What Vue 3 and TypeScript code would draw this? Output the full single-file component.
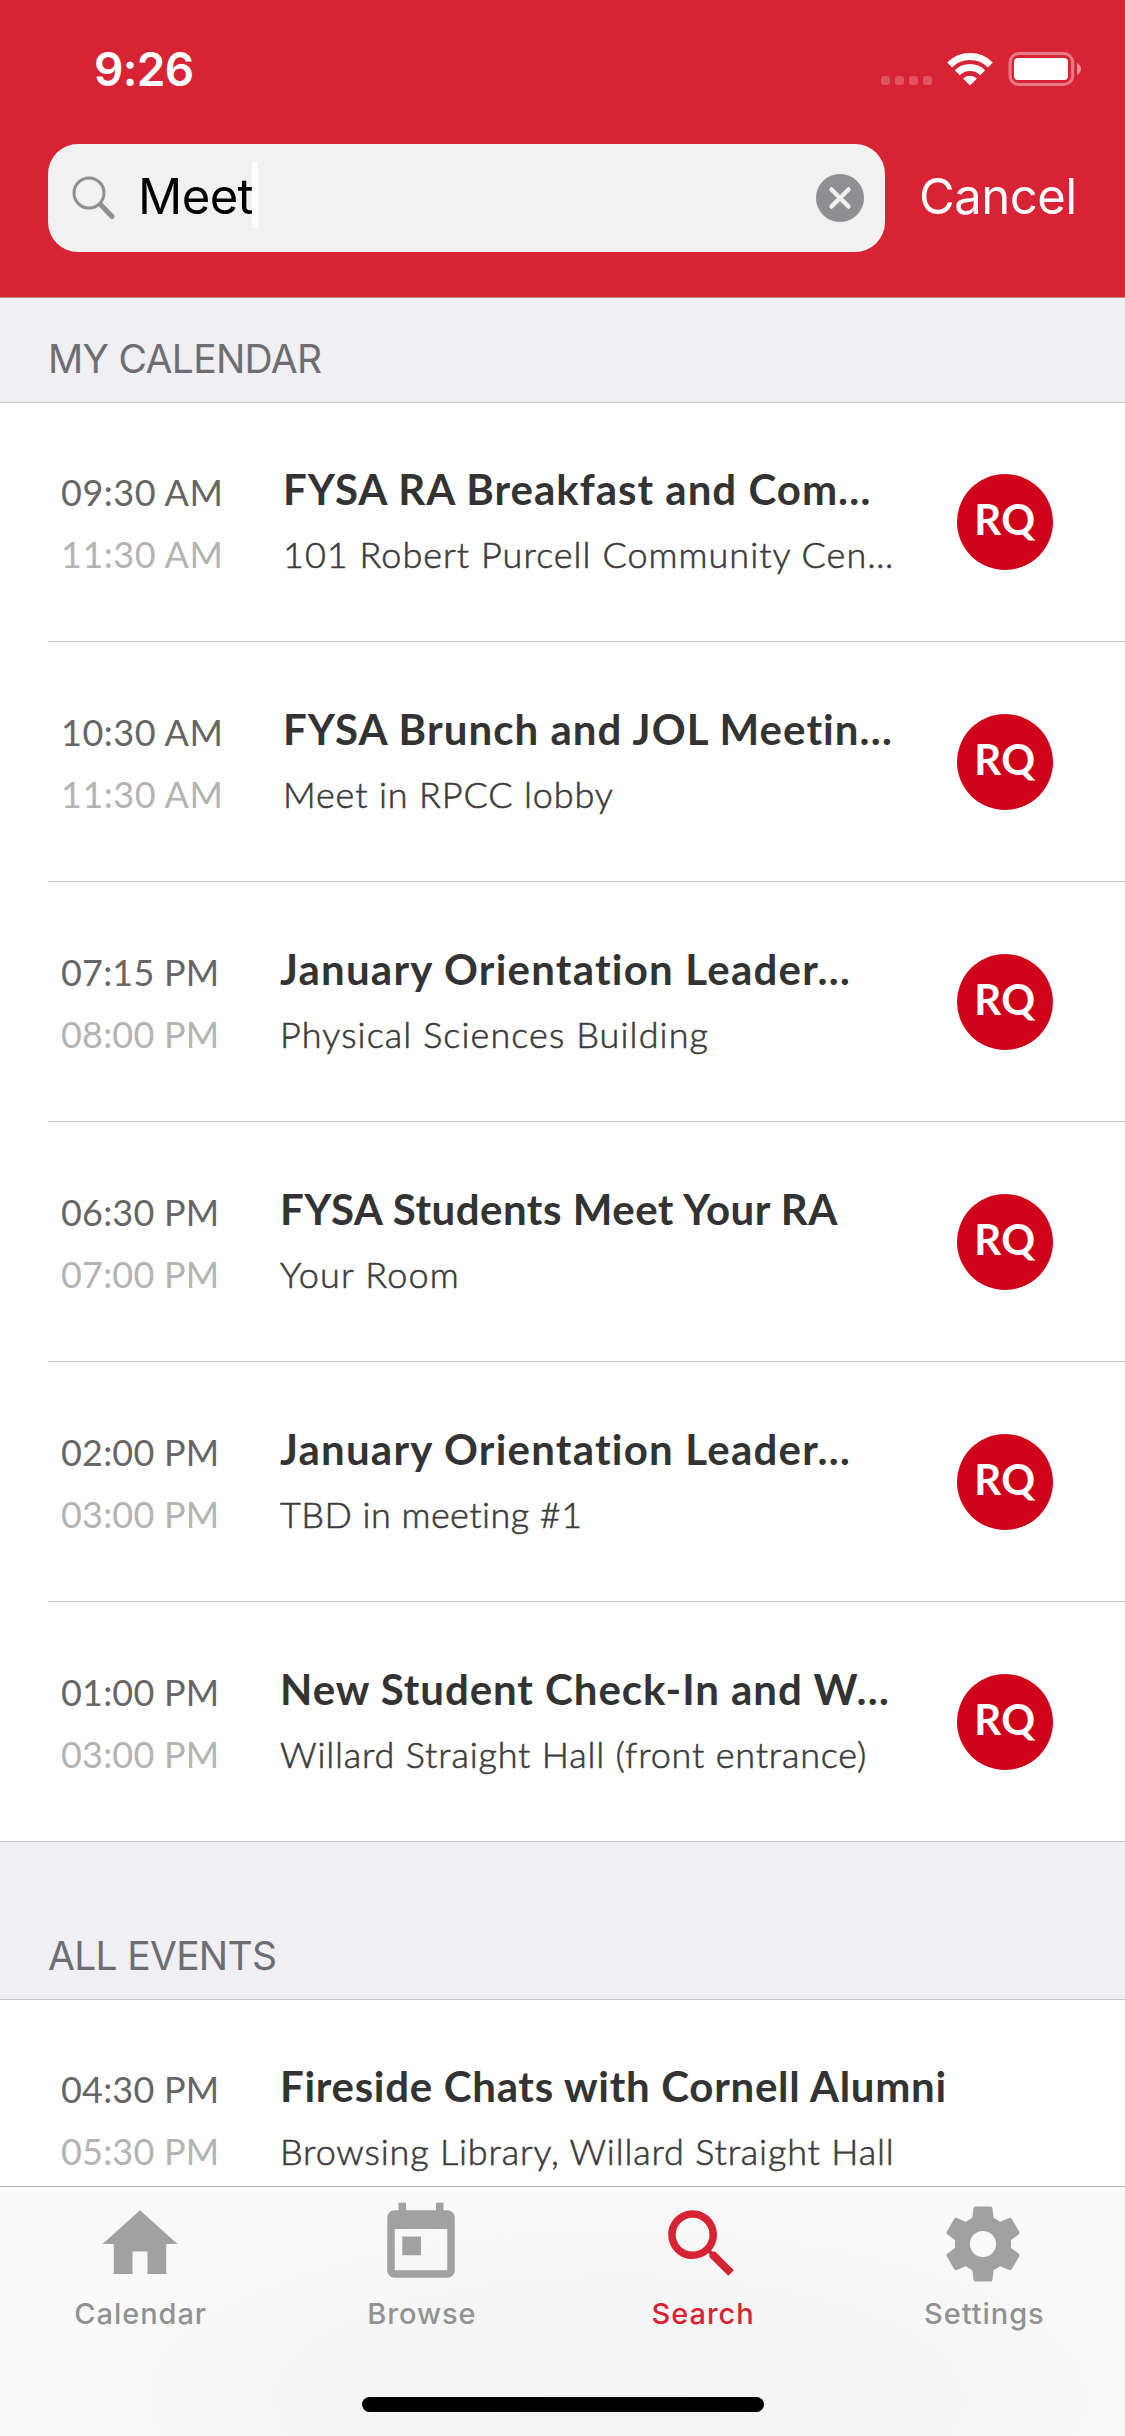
<script setup lang="ts">
interface CalendarEvent {
  start: string
  end: string
  title: string
  place: string
  titleTracking: number
  placeTracking: number
  owner?: string
}

interface Section {
  name: string
  events: CalendarEvent[]
}

interface Tab {
  label: string
  icon: string
  active?: boolean
}

const sections: Section[] = [
  {
    name: 'MY CALENDAR',
    events: [
      { start: '09:30 AM', end: '11:30 AM', title: 'FYSA RA Breakfast and Com…', place: '101 Robert Purcell Community Cen…', titleTracking: 1, placeTracking: 1.03, owner: 'RQ' },
      { start: '10:30 AM', end: '11:30 AM', title: 'FYSA Brunch and JOL Meetin…', place: 'Meet in RPCC lobby', titleTracking: 1.06, placeTracking: 0.85, owner: 'RQ' },
      { start: '07:15 PM', end: '08:00 PM', title: 'January Orientation Leader…', place: 'Physical Sciences Building', titleTracking: 1.22, placeTracking: 1.1, owner: 'RQ' },
      { start: '06:30 PM', end: '07:00 PM', title: 'FYSA Students Meet Your RA', place: 'Your Room', titleTracking: 0.5, placeTracking: 1.2, owner: 'RQ' },
      { start: '02:00 PM', end: '03:00 PM', title: 'January Orientation Leader…', place: 'TBD in meeting #1', titleTracking: 1.22, placeTracking: 0.45, owner: 'RQ' },
      { start: '01:00 PM', end: '03:00 PM', title: 'New Student Check-In and W…', place: 'Willard Straight Hall (front entrance)', titleTracking: 0.94, placeTracking: 0.82, owner: 'RQ' },
    ],
  },
  {
    name: 'ALL EVENTS',
    events: [
      { start: '04:30 PM', end: '05:30 PM', title: 'Fireside Chats with Cornell Alumni', place: 'Browsing Library, Willard Straight Hall', titleTracking: 0.7, placeTracking: 0.82 },
    ],
  },
]

const tabs: Tab[] = [
  { label: 'Calendar', icon: 'M10 20v-6h4v6h5v-8h3L12 3 2 12h3v8z' },
  { label: 'Browse', icon: 'M19 3h-1V1h-2v2H8V1H6v2H5c-1.11 0-1.99.9-1.99 2L3 19c0 1.1.89 2 2 2h14c1.1 0 2-.9 2-2V5c0-1.1-.9-2-2-2zm0 16H5V8h14v11zM7 10h5v5H7z' },
  { label: 'Search', active: true, icon: 'M15.5 14h-.79l-.28-.27C15.41 12.59 16 11.11 16 9.5 16 5.91 13.09 3 9.5 3S3 5.91 3 9.5 5.91 16 9.5 16c1.61 0 3.09-.59 4.23-1.57l.27.28v.79l5 4.99L20.49 19l-4.99-5zm-6 0C7.01 14 5 11.99 5 9.5S7.01 5 9.5 5 14 7.01 14 9.5 11.99 14 9.5 14z' },
  { label: 'Settings', icon: 'M19.43 12.98c.04-.32.07-.64.07-.98s-.03-.66-.07-.98l2.11-1.65c.19-.15.24-.42.12-.64l-2-3.46c-.12-.22-.39-.3-.61-.22l-2.49 1c-.52-.4-1.08-.73-1.69-.98l-.38-2.65C14.46 2.18 14.25 2 14 2h-4c-.25 0-.46.18-.49.42l-.38 2.65c-.61.25-1.17.59-1.69.98l-2.49-1c-.23-.09-.49 0-.61.22l-2 3.46c-.13.22-.07.49.12.64l2.11 1.65c-.04.32-.07.65-.07.98s.03.66.07.98l-2.11 1.65c-.19.15-.24.42-.12.64l2 3.46c.12.22.39.3.61.22l2.49-1c.52.4 1.08.73 1.69.98l.38 2.65c.03.24.24.42.49.42h4c.25 0 .46-.18.49-.42l.38-2.65c.61-.25 1.17-.59 1.69-.98l2.49 1c.23.09.49 0 .61-.22l2-3.46c.12-.22.07-.49-.12-.64l-2.11-1.65zM12 15.5c-1.93 0-3.5-1.57-3.5-3.5s1.57-3.5 3.5-3.5 3.5 1.57 3.5 3.5-1.57 3.5-3.5 3.5z' },
]
</script>

<template>
  <div class="screen">
    <header class="top">
      <div class="status">
        <span class="clock">9:26</span>
        <span class="dots"><i v-for="n in 4" :key="n" /></span>
        <svg class="wifi" width="46" height="34" viewBox="0 0 46 34">
          <g fill="none" stroke="#fff" stroke-width="7">
            <path d="M2.6 12.9a29 29 0 0 1 40.8 0" />
            <path d="M10.3 20.8a18 18 0 0 1 25.4 0" />
          </g>
          <path d="M16 26.6a9.8 9.8 0 0 1 14 0L23 33.5z" fill="#fff" />
        </svg>
        <svg class="battery" width="74" height="34" viewBox="0 0 74 34">
          <rect x="1.5" y="1.5" width="59" height="31" rx="8.5" fill="none" stroke="#fff" stroke-opacity=".4" stroke-width="3" transform="translate(0.5 0) scale(1.06 1)" />
          <rect x="6" y="6" width="54" height="22" rx="4" fill="#fff" />
          <path d="M69 11v12c2.5-1 4-3.5 4-6s-1.5-5-4-6z" fill="#fff" fill-opacity=".5" />
        </svg>
      </div>
      <div class="searchbar">
        <div class="field">
          <svg class="glass" width="44" height="44" viewBox="0 0 44 44" fill="none" stroke="#8e8e93">
            <circle cx="17" cy="17" r="15" stroke-width="3" />
            <path d="M28.5 28.5l11.5 12" stroke-width="5" stroke-linecap="round" />
          </svg>
          <span class="query">Meet</span>
          <span class="caret" />
          <svg class="clear" width="48" height="48" viewBox="0 0 48 48">
            <circle cx="24" cy="24" r="24" fill="#8e8e93" />
            <path d="M15.5 15.5l17 17M32.5 15.5l-17 17" stroke="#f1f1f1" stroke-width="4.5" stroke-linecap="round" />
          </svg>
        </div>
        <span class="cancel">Cancel</span>
      </div>
    </header>

    <main class="results">
      <section v-for="section in sections" :key="section.name">
        <h2 class="heading">{{ section.name }}</h2>
        <ul class="list">
          <li v-for="(event, i) in section.events" :key="i" class="row">
            <div class="cell" :class="{ morning: event.start.endsWith('AM') }">
              <div class="times">
                <span class="start">{{ event.start }}</span>
                <span class="end">{{ event.end }}</span>
              </div>
              <div class="info">
                <span class="title" :style="{ letterSpacing: event.titleTracking + 'px' }">{{ event.title }}</span>
                <span class="place" :style="{ letterSpacing: event.placeTracking + 'px' }">{{ event.place }}</span>
              </div>
              <span v-if="event.owner" class="avatar">{{ event.owner }}</span>
            </div>
          </li>
        </ul>
      </section>
    </main>

    <nav class="tabs">
      <div class="tabrow">
        <div v-for="tab in tabs" :key="tab.label" class="tab" :class="{ active: tab.active }">
          <svg width="90" height="90" viewBox="0 0 24 24"><path :d="tab.icon" fill="currentColor" /></svg>
          <span class="label">{{ tab.label }}</span>
        </div>
      </div>
      <div class="home" />
    </nav>
  </div>
</template>

<style>
body {
  margin: 0;
}
</style>

<style scoped>
.screen {
  display: flex;
  flex-direction: column;
  width: 1125px;
  height: 2436px;
  overflow: hidden;
  background: #fff;
  font-family: Inter, "Liberation Sans", sans-serif;
}

.top {
  flex: none;
  box-sizing: border-box;
  height: 298px;
  background: #d82335;
  border-bottom: 1px solid #b98a8f;
  color: #fff;
}

.status {
  display: flex;
  align-items: flex-start;
  height: 144px;
}

.clock {
  width: 787px;
  margin-top: 39px;
  padding-left: 94px;
  font-size: 46px;
  font-weight: 600;
  line-height: 60px;
  letter-spacing: -0.7px;
}

.dots {
  display: flex;
  gap: 5px;
  margin-top: 76px;
}

.dots i {
  width: 9px;
  height: 9px;
  border-radius: 3px;
  background: rgba(255, 255, 255, 0.22);
}

.wifi,
.battery {
  margin: 52px 0 0 15px;
}

.searchbar {
  display: flex;
  align-items: center;
  height: 108px;
  padding-left: 48px;
}

.field {
  display: flex;
  align-items: center;
  box-sizing: border-box;
  width: 837px;
  height: 108px;
  padding: 0 21px 0 24px;
  border-radius: 30px;
  background: #f1f1f1;
}

.glass {
  flex: none;
}

.query {
  padding: 0 0 2px 22px;
  color: #000;
  font-size: 49px;
  line-height: 60px;
  letter-spacing: -0.6px;
}

.caret {
  width: 6px;
  height: 66px;
  margin: -6px 0 0 -1px;
  border-radius: 3px;
  background: #fff;
}

.clear {
  margin-left: auto;
}

.cancel {
  margin-left: 34px;
  padding-bottom: 2px;
  font-size: 49px;
  line-height: 60px;
  letter-spacing: -0.5px;
}

.results {
  flex: 1;
  min-height: 0;
  overflow: hidden;
}

.heading {
  display: flex;
  align-items: flex-end;
  box-sizing: border-box;
  height: 104px;
  margin: 0;
  padding: 0 0 18px 48px;
  background: #efeff4;
  color: #6d6d72;
  font-size: 39px;
  font-weight: 400;
  line-height: 50px;
  letter-spacing: -0.7px;
}

section + section .heading {
  height: 157px;
}

.list {
  margin: 0;
  padding: 0;
  list-style: none;
  box-shadow: inset 0 1px #c8c7cc;
}

.row {
  box-sizing: border-box;
  height: 240px;
  padding-left: 48px;
}

.cell {
  display: flex;
  box-sizing: border-box;
  height: 240px;
  padding-left: 13px;
  border-bottom: 1px solid #c8c7cc;
}

.row:last-child {
  border-bottom: 1px solid #c8c7cc;
}

.row:last-child .cell {
  height: 239px;
  border-bottom: 0;
}

.times,
.info {
  display: flex;
  flex-direction: column;
  font-family: Lato, "Noto Sans", sans-serif;
  white-space: nowrap;
}

.times {
  width: 219px;
  padding-top: 65px;
  gap: 12px;
  font-size: 36px;
  line-height: 50px;
  letter-spacing: 0.2px;
}

.start {
  color: #666;
}

.end {
  color: #b3b3b3;
}

.info {
  width: 677px;
  padding-top: 57px;
  gap: 10px;
}

.morning .times {
  letter-spacing: 0.5px;
}

.morning .info {
  width: 674px;
  padding-left: 3px;
}

.title {
  color: #333;
  font-size: 42px;
  font-weight: 700;
  line-height: 60px;
}

.place {
  color: #3c3c3c;
  font-size: 36px;
  font-weight: 300;
  line-height: 50px;
  -webkit-text-stroke: 0.6px #3c3c3c;
}

.avatar {
  width: 96px;
  height: 96px;
  margin-top: 72px;
  border-radius: 50%;
  background: #d0021b;
  color: #fff;
  font-family: Lato, "Noto Sans", sans-serif;
  font-size: 42px;
  font-weight: 700;
  line-height: 90px;
  letter-spacing: 0.5px;
  text-align: center;
}

.tabs {
  flex: none;
  box-sizing: border-box;
  height: 250px;
  border-top: 1px solid #b0b0b2;
  background: radial-gradient(ellipse 560px 200px at 55% 85%, #f3f3f3, #f5f5f5 50%, #f9f9f9);
}

.tabrow {
  display: flex;
  height: 210px;
}

.tab {
  display: flex;
  flex: 1;
  flex-direction: column;
  align-items: center;
  padding-top: 12px;
  color: #a1a1a1;
}

.tab svg {
  margin-right: 2px;
}

.label {
  margin-top: 5px;
  color: #929292;
  font-size: 29px;
  font-weight: 500;
  line-height: 40px;
  letter-spacing: 0.95px;
}

.tab.active,
.tab.active .label {
  color: #d82335;
}

.home {
  width: 402px;
  height: 15px;
  margin: 0 auto;
  border-radius: 8px;
  background: #000;
}
</style>
